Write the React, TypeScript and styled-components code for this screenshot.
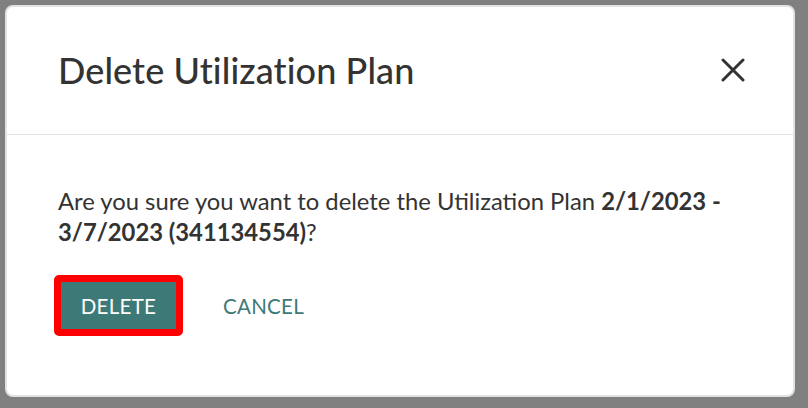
import React from "react";
import styled, { createGlobalStyle } from "styled-components";

const Global = createGlobalStyle`
  html, body { margin: 0; padding: 0; }
  body {
    background: #808080;
    font-family: Lato, "Open Sans", sans-serif;
    width: 808px;
    height: 408px;
    overflow: hidden;
  }
`;

const Overlay = styled.div`
  width: 808px;
  height: 408px;
  box-sizing: border-box;
  padding: 5px 13px 11px 5px;
  display: flex;
`;

const Dialog = styled.div`
  flex: 1;
  background: #ffffff;
  border: 2px solid #e2e2e2;
  border-radius: 8px;
  display: flex;
  flex-direction: column;
`;

const Header = styled.div`
  height: 128px;
  box-sizing: border-box;
  padding: 0 48px 2px 51px;
  display: flex;
  align-items: center;
  justify-content: space-between;
  border-bottom: 1px solid #e3e3e3;
`;

const Title = styled.h2`
  margin: 0;
  font-size: 36px;
  font-weight: 500;
  letter-spacing: 0.1px;
  color: #333333;
`;

const CloseButton = styled.button`
  border: 0;
  background: transparent;
  padding: 0;
  width: 24px;
  height: 24px;
  display: flex;
  cursor: pointer;
`;

const Body = styled.div`
  padding: 51px 51px 0 51px;
  display: flex;
  flex-direction: column;
`;

const Message = styled.p`
  margin: 0;
  font-size: 23.8px;
  line-height: 31px;
  color: #333333;
`;

const Strong = styled.b`
  font-weight: 700;
`;

const Actions = styled.div`
  margin-top: 27px;
  display: flex;
  align-items: center;
  gap: 40px;
  margin-left: -4px;
`;

const Focus = styled.div`
  border: 7px solid #ff0000;
  border-radius: 5px;
  display: flex;
`;

const PrimaryButton = styled.button`
  width: 115px;
  height: 47px;
  border: 0;
  background: #3d7a77;
  color: #ffffff;
  font-family: Lato, sans-serif;
  font-size: 20.5px;
  letter-spacing: 0.3px;
  cursor: pointer;
`;

const TextButton = styled.button`
  border: 0;
  background: transparent;
  color: #3d7a77;
  font-family: Lato, sans-serif;
  font-size: 20.5px;
  letter-spacing: 0.3px;
  padding: 0;
  cursor: pointer;
`;

export default function App() {
  return (
    <>
      <Global />
      <Overlay>
        <Dialog>
          <Header>
            <Title>Delete Utilization Plan</Title>
            <CloseButton aria-label="Close">
              <svg width="24" height="24" viewBox="0 0 24 24">
                <path d="M2 2 L22 22 M22 2 L2 22" stroke="#333" strokeWidth="3" strokeLinecap="round" fill="none" />
              </svg>
            </CloseButton>
          </Header>
          <Body>
            <Message>
              Are you sure you want to delete the Utilization Plan <Strong>2/1/2023 - 3/7/2023 (341134554)</Strong>?
            </Message>
            <Actions>
              <Focus>
                <PrimaryButton>DELETE</PrimaryButton>
              </Focus>
              <TextButton>CANCEL</TextButton>
            </Actions>
          </Body>
        </Dialog>
      </Overlay>
    </>
  );
}
